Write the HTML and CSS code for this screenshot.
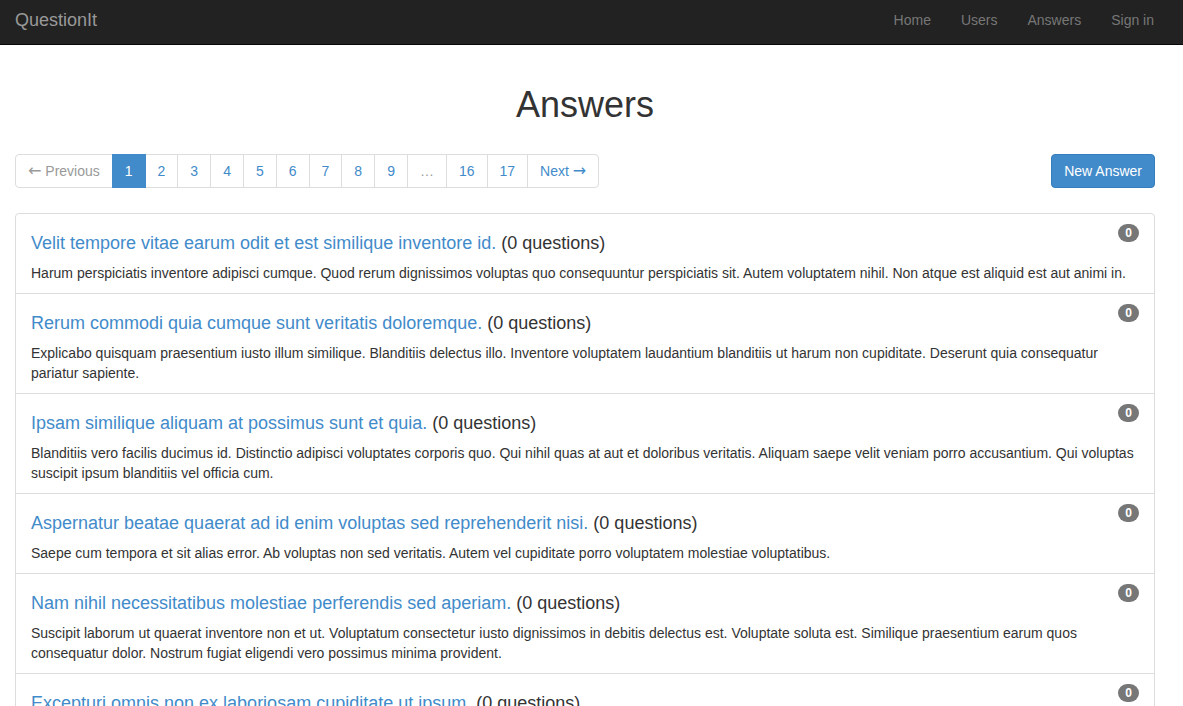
FILE: index.html
```html
<!DOCTYPE html>
<html>
<head>
<meta charset="utf-8">
<title>QuestionIt - Answers</title>
<link rel="stylesheet" href="styles.css">
</head>
<body>
<nav class="navbar">
  <a class="brand" href="#">QuestionIt</a>
  <ul class="nav-links">
    <li><a href="#">Home</a></li>
    <li><a href="#">Users</a></li>
    <li><a href="#">Answers</a></li>
    <li><a href="#">Sign in</a></li>
  </ul>
</nav>
<main class="container">
  <h1 class="page-title">Answers</h1>
  <div class="toolbar">
    <ul class="pagination">
      <li class="disabled"><span><span class="arrow">&larr;</span> Previous</span></li>
      <li class="active"><span>1</span></li>
      <li><a href="#">2</a></li>
      <li><a href="#">3</a></li>
      <li><a href="#">4</a></li>
      <li><a href="#">5</a></li>
      <li><a href="#">6</a></li>
      <li><a href="#">7</a></li>
      <li><a href="#">8</a></li>
      <li><a href="#">9</a></li>
      <li class="disabled"><span>&hellip;</span></li>
      <li><a href="#">16</a></li>
      <li><a href="#">17</a></li>
      <li><a href="#">Next <span class="arrow">&rarr;</span></a></li>
    </ul>
    <a class="btn-primary" href="#">New Answer</a>
  </div>
  <div class="list-group">
    <div class="list-item">
      <span class="badge">0</span>
      <h4 class="item-heading"><a href="#">Velit tempore vitae earum odit et est similique inventore id.</a> (0 questions)</h4>
      <p class="item-text">Harum perspiciatis inventore adipisci cumque. Quod rerum dignissimos voluptas quo consequuntur perspiciatis sit. Autem voluptatem nihil. Non atque est aliquid est aut animi in.</p>
    </div>
    <div class="list-item">
      <span class="badge">0</span>
      <h4 class="item-heading"><a href="#">Rerum commodi quia cumque sunt veritatis doloremque.</a> (0 questions)</h4>
      <p class="item-text">Explicabo quisquam praesentium iusto illum similique. Blanditiis delectus illo. Inventore voluptatem laudantium blanditiis ut harum non cupiditate. Deserunt quia consequatur pariatur sapiente.</p>
    </div>
    <div class="list-item">
      <span class="badge">0</span>
      <h4 class="item-heading"><a href="#">Ipsam similique aliquam at possimus sunt et quia.</a> (0 questions)</h4>
      <p class="item-text">Blanditiis vero facilis ducimus id. Distinctio adipisci voluptates corporis quo. Qui nihil quas at aut et doloribus veritatis. Aliquam saepe velit veniam porro accusantium. Qui voluptas suscipit ipsum blanditiis vel officia cum.</p>
    </div>
    <div class="list-item">
      <span class="badge">0</span>
      <h4 class="item-heading"><a href="#">Aspernatur beatae quaerat ad id enim voluptas sed reprehenderit nisi.</a> (0 questions)</h4>
      <p class="item-text">Saepe cum tempora et sit alias error. Ab voluptas non sed veritatis. Autem vel cupiditate porro voluptatem molestiae voluptatibus.</p>
    </div>
    <div class="list-item">
      <span class="badge">0</span>
      <h4 class="item-heading"><a href="#">Nam nihil necessitatibus molestiae perferendis sed aperiam.</a> (0 questions)</h4>
      <p class="item-text">Suscipit laborum ut quaerat inventore non et ut. Voluptatum consectetur iusto dignissimos in debitis delectus est. Voluptate soluta est. Similique praesentium earum quos consequatur dolor. Nostrum fugiat eligendi vero possimus minima provident.</p>
    </div>
    <div class="list-item">
      <span class="badge">0</span>
      <h4 class="item-heading"><a href="#">Excepturi omnis non ex laboriosam cupiditate ut ipsum. </a> (0 questions)</h4>
      <p class="item-text">Quia dolores sit voluptas et. Est quo ut ea officiis. Autem nihil facere expedita aut quibusdam.</p>
    </div>
  </div>
</main>
</body>
</html>
```
FILE: styles.css
```css
html {
  scrollbar-width: none;
}
* {
  box-sizing: border-box;
}
body {
  margin: 0;
  font-family: "Liberation Sans", Arial, Helvetica, sans-serif;
  font-size: 14px;
  line-height: 20px;
  color: #333;
  background: #fff;
}
a {
  color: #428bca;
  text-decoration: none;
}

/* Navbar */
.navbar {
  height: 45px;
  background: #222;
  border-bottom: 1px solid #080808;
  display: flex;
  justify-content: space-between;
  align-items: flex-start;
  padding: 0 14px 0 15px;
}
.brand {
  color: #999;
  font-size: 18px;
  line-height: 20px;
  padding: 10px 0;
}
.nav-links {
  list-style: none;
  margin: 0;
  padding: 0;
  display: flex;
}
.nav-links a {
  display: block;
  color: #777;
  padding: 10px 15px;
  line-height: 20px;
}

/* Content */
.container {
  width: 1140px;
  margin-left: 15px;
  padding-top: 20px;
}
.page-title {
  text-align: center;
  font-size: 36px;
  font-weight: 500;
  line-height: 40px;
  margin: 20px 0 29px;
}
.toolbar {
  display: flex;
  justify-content: space-between;
  align-items: flex-start;
}
.pagination {
  list-style: none;
  margin: 0;
  padding: 0;
  display: flex;
}
.pagination li > a,
.pagination li > span {
  display: block;
  padding: 6px 12px;
  line-height: 20px;
  border: 1px solid #ddd;
  margin-left: -1px;
  color: #428bca;
  background: #fff;
}
.pagination .arrow {
  font-family: "DejaVu Sans", sans-serif;
  font-size: 16px;
  line-height: 1;
}
.pagination li:first-child > * {
  margin-left: 0;
  border-radius: 4px 0 0 4px;
}
.pagination li:last-child > * {
  border-radius: 0 4px 4px 0;
}
.pagination li.disabled > span {
  color: #999;
}
.pagination li.active > span {
  background: #428bca;
  border-color: #428bca;
  color: #fff;
  position: relative;
  z-index: 1;
}
.btn-primary {
  display: block;
  padding: 6px 12px;
  line-height: 20px;
  border: 1px solid #357ebd;
  border-radius: 4px;
  background: #428bca;
  color: #fff;
}

/* List group */
.list-group {
  margin-top: 25px;
  border: 1px solid #ddd;
  border-radius: 4px;
}
.list-item {
  padding: 10px 15px;
}
.list-item + .list-item {
  border-top: 1px solid #ddd;
}
.badge {
  float: right;
  min-width: 10px;
  padding: 3px 7px;
  font-size: 12px;
  font-weight: bold;
  line-height: 12px;
  color: #fff;
  background: #777;
  border-radius: 10px;
  text-align: center;
}
.item-heading {
  font-size: 18px;
  font-weight: 500;
  line-height: 19px;
  margin: 10px 0;
}
.item-text {
  margin: 0;
}
```
